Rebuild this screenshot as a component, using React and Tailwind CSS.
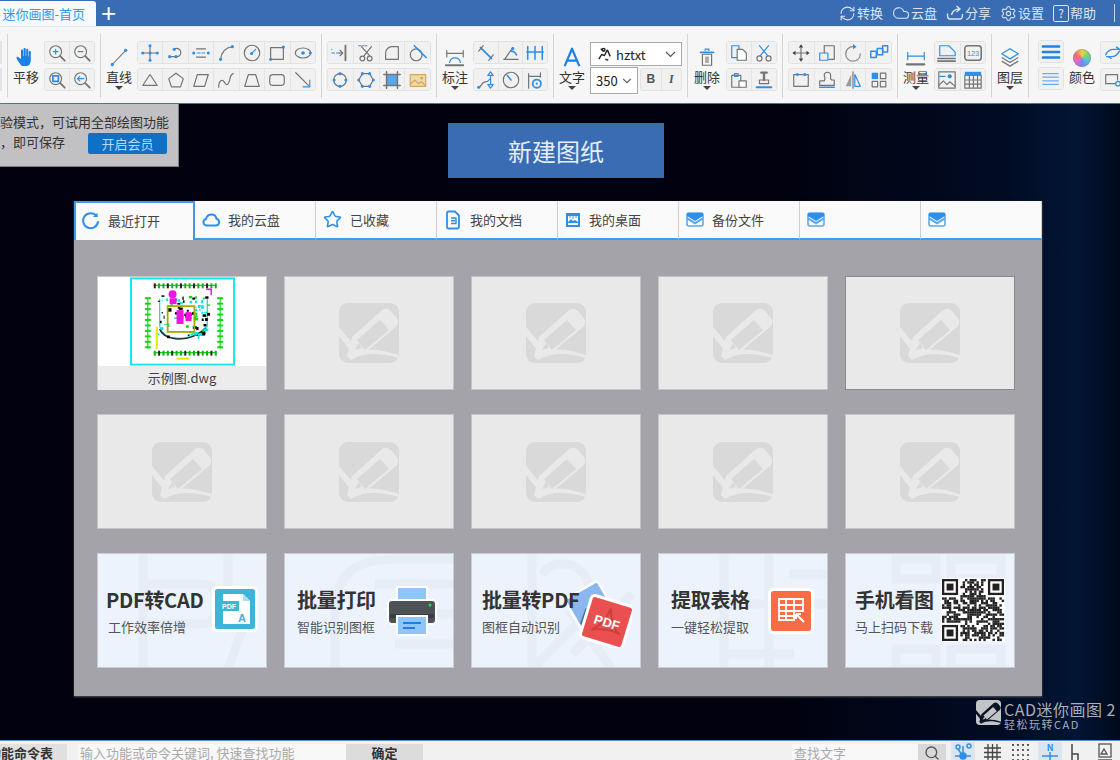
import React from "react";
import { RefreshCw, Cloud, Settings, Star, Search } from "lucide-react";

const G = "#747474";
const B = "#2f8fe8";
const FONT = "font-['Noto_Sans_CJK_SC','Noto_Sans',sans-serif]";

const D = ({ x, y, r = 1.7 }) => <circle cx={x} cy={y} r={r} fill={B} stroke="none" />;

const ICONS = {
  zoomIn: <><circle cx="9.5" cy="9.5" r="6.5" /><path d="M7 9.5h5M9.5 7v5" stroke={B} /><path d="M14.5 14.5l5 5" strokeWidth="2" /></>,
  zoomOut: <><circle cx="9.5" cy="9.5" r="6.5" /><path d="M7 9.5h5" stroke={B} /><path d="M14.5 14.5l5 5" strokeWidth="2" /></>,
  zoomWin: <><circle cx="9.5" cy="9.5" r="6.5" /><rect x="6.5" y="6.5" width="6" height="6" stroke={B} strokeWidth="2" /><path d="M14.5 14.5l5 5" strokeWidth="2" /></>,
  zoomPrev: <><circle cx="9.5" cy="9.5" r="6.5" /><path d="M6 9.5h7M8.5 7L6 9.5 8.5 12" stroke={B} /><path d="M14.5 14.5l5 5" strokeWidth="2" /></>,
  cross: <><path d="M3 11h16M11 3v16" /><D x="3" y="11" /><D x="19" y="11" /><D x="11" y="3" /><D x="11" y="19" /><D x="11" y="11" /></>,
  poly: <><path d="M4 15h8a4.5 4.5 0 1 0-3-8" /><D x="4" y="15" /><D x="11" y="15" /><D x="9" y="7" /></>,
  dash: <><path d="M6 6.5h10M6 15.5h10" /><D x="3" y="11" /><D x="19" y="11" /><path d="M7 11h3M12 11h3" stroke={B} /></>,
  arc: <><path d="M5 18C6 10 11 5 18 4" /><D x="5" y="18" /><D x="18" y="4" /></>,
  circ: <><circle cx="11" cy="11" r="8.5" /><path d="M11 11l4-4" stroke={B} /><D x="10.5" y="11.5" /></>,
  rect: <><rect x="4" y="5" width="14" height="13" /><D x="18" y="4.5" /><D x="4" y="18" /></>,
  ell: <><ellipse cx="11" cy="11" rx="8.5" ry="5.5" /><D x="11" y="11" r="2" /><D x="19" y="11" /></>,
  tri: <path d="M11 5l8 12H3z" />,
  pent: <path d="M11 3.5l8 6-3 9H6l-3-9z" />,
  para: <path d="M7 5h12l-4 13H3z" />,
  curve: <path d="M3 19c0-8 4-9 6-6s3 5 5 1 1-9 5-10" />,
  trap: <path d="M7 5h8l4 13H3z" />,
  round: <rect x="3" y="5" width="16" height="12" rx="3.5" />,
  arrow: <><path d="M3 3l14 14" /><path d="M18.5 11v7.5H11" stroke={B} /></>,
  trim: <><path d="M2 11h3M7 11h3" stroke={B} /><path d="M2 7h0M11 8l3 3-3 3M10 11h4" /><path d="M17 3v16" strokeWidth="2" /></>,
  scissorDot: <><path d="M3 3h9" stroke={B} strokeDasharray="2 1.5" /><path d="M6 4l9 10M17 4l-8 10" /><circle cx="7" cy="17" r="2.6" /><circle cx="15" cy="17" r="2.6" /></>,
  corner: <path d="M11 4h7v14H4v-7a7 7 0 0 1 7-7z" />,
  circLine: <><circle cx="9" cy="13" r="6.5" /><path d="M7 3l13 13" stroke={B} strokeWidth="1.8" /></>,
  cd1: <><circle cx="11" cy="11" r="7" /><D x="11" y="4" /><D x="4.5" y="11" /><D x="17.5" y="11" /><D x="11" y="18" /></>,
  cd2: <><path d="M7 4h8l4 7-4 7H7l-4-7z" /><D x="7" y="4" /><D x="15" y="4" /><D x="3" y="11" /><D x="19" y="11" /><D x="7" y="18" /><D x="15" y="18" /></>,
  hatch: <><rect x="5" y="5" width="12" height="12" fill="#5aa6ea" stroke="none" /><path d="M5 2v18M17 2v18M2 5h18M2 17h18" strokeWidth="1.6" /></>,
  pic: <><rect x="2.5" y="5" width="17" height="13" fill="#f0d9a8" stroke="#d7a85b" /><path d="M2.5 16l5-5 4 4 3-2 5 4" stroke="#d7a85b" /><circle cx="15" cy="9" r="1.5" fill="#d7a85b" stroke="none" /></>,
  dimD: <><path d="M5 5l12 12" stroke={B} strokeWidth="2" /><path d="M3 9l5-6M14 19l5-6" /></>,
  dimA: <><path d="M3 18h16M4 18L13 5" /><path d="M11 9a7 7 0 0 1 6 4" stroke={B} strokeWidth="1.8" /><D x="13" y="6" /></>,
  dimM: <><path d="M3 4v14M11 4v14M19 4v14" stroke={B} strokeWidth="1.7" /><path d="M2 10h18" stroke={B} strokeWidth="1.7" /></>,
  leader: <><path d="M3 19c3 0 3-6 7-6s3-1 5-3" /><path d="M16 2l-3 4h6zM16 20l-3-4h6zM16 6v10" stroke={B} fill="none" /><D x="3" y="19" /></>,
  clock: <><circle cx="11" cy="11" r="8.5" /><path d="M7 6l4 5" stroke={B} strokeWidth="1.8" /></>,
  gearDim: <><path d="M4 4v16M17 3v5M4 7h13" /><circle cx="13" cy="15" r="4.5" stroke={B} strokeWidth="2" /><circle cx="13" cy="15" r="1.2" fill={B} stroke="none" /></>,
  copy: <><path d="M3 3h8v13H3z" stroke={B} /><path d="M9 7h6l4 4v8H9z" fill="#fff" /></>,
  scissors: <><path d="M6 3l9 11M16 3l-9 11" stroke={B} /><circle cx="6" cy="17" r="2.8" /><circle cx="16" cy="17" r="2.8" /></>,
  paste: <><path d="M3 6h10v13H3z" /><path d="M6 4h4v3H6z" stroke={B} /><path d="M11 12h8v7h-8z" fill="#fff" /></>,
  brush: <><path d="M11 3v8M8 3h6" strokeWidth="2.5" /><path d="M6 11h10v4H6z" /><path d="M3 19h16" stroke={B} strokeWidth="2.4" /></>,
  move: <><path d="M11 5v12M5 11h12" /><path d="M11 1.5L8.5 5h5zM11 20.5L8.5 17h5zM1.5 11L5 8.5v5zM20.5 11L17 8.5v5z" fill="#444" stroke="none" /></>,
  scale: <><path d="M8 3h11v15h-6" /><rect x="3" y="11" width="9" height="8" stroke={B} /><path d="M8 3v8" /></>,
  rotate: <><path d="M11 4a8 8 0 1 0 8 8" stroke="#888" /><path d="M11 1l4 3-4 3z" fill={B} stroke="none" /></>,
  array: <><rect x="2" y="9" width="6" height="7" stroke={B} strokeWidth="1.6" /><rect x="9" y="6" width="6" height="7" stroke={B} strokeWidth="1.6" /><rect x="15" y="3" width="5.5" height="7" stroke={B} strokeWidth="1.6" /></>,
  stretch: <><path d="M6 5H3v13h16V5h-3" /><path d="M9 5h4" /><D x="7" y="5" /><D x="15" y="5" /></>,
  stamp: <><path d="M8 12c2-3 0-4 0-6a3.5 3.5 0 0 1 7 0c0 2-1 3 1 5h3v6H3v-5h5" /><path d="M3 19h16" stroke={B} strokeWidth="1.6" /></>,
  mirror: <><path d="M9 5L3 18h6z" fill="#999" stroke="none" /><path d="M13 5l6 13h-6z" stroke={B} /><path d="M11 2v18" /></>,
  squares: <><rect x="3" y="3" width="7" height="7" fill={B} stroke="none" /><rect x="12.5" y="3.5" width="6" height="6" /><rect x="3.5" y="12.5" width="6" height="6" /><rect x="12.5" y="12.5" width="6" height="6" /></>,
  area: <><path d="M3 3h10l7 7v4H3z" stroke={B} /><path d="M1 17h20M1 20h20" strokeDasharray="1.5 1" strokeWidth="1.8" /></>,
  num: <><rect x="2" y="3" width="18" height="16" rx="3" strokeWidth="1.7" /><text x="11" y="14.5" fontSize="8" textAnchor="middle" fill={B} stroke="none" fontFamily="Liberation Sans">123</text></>,
  image: <><rect x="2" y="2" width="18" height="18" /><path d="M2 17l5-5 4 4 3-3 6 5" /><path d="M3 7h6" stroke={B} /><circle cx="14" cy="7" r="2.3" fill={B} stroke="none" /></>,
  table: <><rect x="2" y="2" width="18" height="4.5" fill={B} stroke="none" /><path d="M2 6v14h18V6M2 11h18M2 15.5h18M7 6v14M11.5 6v14M16 6v14" /></>,
  lines: <path d="M2 5h18M2 11h18M2 17h18" stroke="#1e82e6" strokeWidth="2.6" />,
  dashes: <path d="M2 5h18M2 9h18M2 13h18M2 17h18" stroke="#63aaf0" strokeDasharray="2 1" />,
  layerRot: <><path d="M3 13c2-5 5-6 9-6h6M18 7l-3-2.5M4 15h6c4 0 6-2 8-6" stroke={B} strokeWidth="1.6" /><path d="M6 15l3 2" stroke={B} /></>,
  rectDot: <><path d="M14 15H3V5h13v6" /><circle cx="16.5" cy="15" r="2.5" stroke={B} /></>,
};

const Ic = ({ n, s = 20 }) => (
  <svg viewBox="0 0 22 22" width={s} height={s} fill="none" stroke={G} strokeWidth="1.3" strokeLinejoin="round" strokeLinecap="round">
    {ICONS[n]}
  </svg>
);

const Row = ({ items }) => (
  <div className="flex h-[23px] rounded-[3px] border border-[#e2e2e2] bg-[#efefef] divide-x divide-[#e4e4e4]">
    {items.map((n, i) => (
      <div key={i} className="flex flex-1 items-center justify-center min-w-0 bg-[#f1f1f1]">
        <Ic n={n} s={20} />
      </div>
    ))}
  </div>
);

const Group = ({ w, top, bottom }) => (
  <div className={`flex shrink-0 flex-col gap-[4px] pt-[14px] ${w}`}>
    <Row items={top} />
    <Row items={bottom} />
  </div>
);

const Sep = () => <div className="mt-[7px] h-[64px] w-px shrink-0 bg-[#d4d4d4]" />;

const Caret = () => <div className="mt-[1px] h-0 w-0 border-x-[4px] border-t-[4px] border-x-transparent border-t-[#444]" />;

const Big = ({ w = "w-[26px]", label, caret = true, children }) => (
  <div className={`flex shrink-0 flex-col items-center pt-[16px] ${w}`}>
    <div className="flex h-[28px] items-center justify-center">{children}</div>
    <div className="-mt-[2px] h-[16px] whitespace-nowrap text-[13px] leading-[16px] text-[#333]">{label}</div>
    {caret && <Caret />}
  </div>
);

const Hand = () => (
  <svg viewBox="0 0 22 22" width="22" height="22" fill="#1c80e6">
    <path d="M7 20c-2-2-5-6-5.500-8-.3-1.300 1.200-1.800 2-.8L6 13V4.500c0-1.500 2-1.500 2 0V10h.5V3c0-1.500 2.200-1.500 2.200 0v7h.5V3.800c0-1.500 2.100-1.500 2.100 0V10.500h.5V6c0-1.400 2-1.400 2 0v8c0 3-1.500 6-4 6z" />
  </svg>
);

const Wand = ({ children, s = 22 }) => (
  <svg viewBox="0 0 24 24" width={s} height={s} fill="none" stroke={G} strokeWidth="1.300" strokeLinecap="round">
    {children}
  </svg>
);

const Toolbar = () => (
  <div className={`flex h-[77px] shrink-0 items-start gap-[5px] overflow-hidden border-b border-b-[#3f74bb] bg-[#f6f6f6] ${FONT}`}>
    <div className="w-[2px] shrink-0 pt-[14px]">
      <div className="h-[23px] bg-[#e4e4e4]" />
      <div className="mt-[4px] h-[23px] bg-[#e4e4e4]" />
    </div>
    <Sep />
    <Big label="平移" caret={false}><Hand /></Big>
    <Group w="w-[51px]" top={["zoomIn", "zoomOut"]} bottom={["zoomWin", "zoomPrev"]} />
    <Sep />
    <Big label="直线">
      <Wand s={20}><path d="M4 21L20 4" /><D x="4" y="21" r="2" /><D x="20" y="4" r="2" /></Wand>
    </Big>
    <Group w="w-[179px]" top={["cross", "poly", "dash", "arc", "circ", "rect", "ell"]} bottom={["tri", "pent", "para", "curve", "trap", "round", "arrow"]} />
    <Sep />
    <Group w="w-[104px]" top={["trim", "scissorDot", "corner", "circLine"]} bottom={["cd1", "cd2", "hatch", "pic"]} />
    <Sep />
    <Big label="标注">
      <Wand><path d="M3 5v7M21 5v7M3 8h18" /><path d="M2 21h20" strokeWidth="2" strokeDasharray="1.500 1" /><path d="M6 18c1-4 3-5 6-5s5 1 6 5" stroke={B} /></Wand>
    </Big>
    <Group w="w-[75px]" top={["dimD", "dimA", "dimM"]} bottom={["leader", "clock", "gearDim"]} />
    <Sep />
    <Big label="文字">
      <svg viewBox="0 0 24 24" width="22" height="22" fill="none" stroke="#1c80e6" strokeWidth="2.400" strokeLinejoin="round"><path d="M4 22L12 3l8 19M7 16h10" /></svg>
    </Big>
    <div className="w-[92px] shrink-0 pt-[15px]">
      <div className="flex h-[24px] items-center gap-[3px] border border-[#a9a9a9] bg-white pl-[5px] pr-[5px]">
        <svg viewBox="0 0 18 18" width="17" height="17" fill="none" stroke="#222" strokeWidth="1.500"><path d="M3 14l3-5 3 1 3-6M5 3l3 2M10 14l3 1M12 4l3 7" /><circle cx="8" cy="4" r="1.500" /></svg>
        <span className="text-[13px] leading-none text-[#222]">hztxt</span>
        <svg className="ml-auto" width="11" height="7" viewBox="0 0 11 7" fill="none" stroke="#555" strokeWidth="1.200"><path d="M1 1l4.500 4.500L10 1" /></svg>
      </div>
      <div className="mt-[1px] flex gap-[2px]">
        <div className="flex h-[27px] w-[48px] shrink-0 items-center justify-between border border-[#a9a9a9] bg-white px-[5px]">
          <span className="text-[13px] text-[#222]">350</span>
          <svg width="10" height="6" viewBox="0 0 11 7" fill="none" stroke="#555" strokeWidth="1.200"><path d="M1 1l4.500 4.500L10 1" /></svg>
        </div>
        <div className="mt-[1px] flex h-[23px] w-[42px] divide-x divide-[#e4e4e4] rounded-[3px] border border-[#e2e2e2] bg-[#f1f1f1] text-[12px] text-[#555]">
          <span className="flex-1 text-center font-bold leading-[21px] font-['Liberation_Sans',sans-serif]">B</span>
          <span className="flex-1 text-center font-bold italic leading-[21px] font-['Liberation_Serif',serif]">I</span>
        </div>
      </div>
    </div>
    <Sep />
    <Big w="w-[28px]" label="删除">
      <Wand><path d="M5 7h14" stroke="#2f8fe8" strokeWidth="2" /><path d="M10 5V3.500h4V5" stroke="#2f8fe8" /><path d="M7 9h10v12H7z" /><path d="M10 11.500h4v7h-4z" fill="#aaa" stroke="none" /></Wand>
    </Big>
    <Group w="w-[51px]" top={["copy", "scissors"]} bottom={["paste", "brush"]} />
    <Sep />
    <Group w="w-[104px]" top={["move", "scale", "rotate", "array"]} bottom={["stretch", "stamp", "mirror", "squares"]} />
    <Sep />
    <Big label="测量">
      <Wand><path d="M3 7v8M21 7v8M3 11h18" stroke="#2f8fe8" /><path d="M2 20h20" strokeWidth="2.400" strokeDasharray="1.500 1" /></Wand>
    </Big>
    <Group w="w-[52px]" top={["area", "num"]} bottom={["image", "table"]} />
    <Sep />
    <Big label="图层">
      <svg viewBox="0 0 24 24" width="22" height="22" fill="none" strokeWidth="1.400" strokeLinejoin="round"><path d="M12 3l9 5.500-9 5.500-9-5.500z" stroke="#2f8fe8" /><path d="M3 12.500l9 5.500 9-5.500M3 16.500l9 5.500 9-5.500" stroke="#777" /></svg>
    </Big>
    <Sep />
    <div className="ml-[4px] flex w-[26px] shrink-0 flex-col gap-[3px] pt-[13px]">
      <div className="h-[24px]"><Row items={["lines"]} /></div>
      <div className="h-[24px]"><Row items={["dashes"]} /></div>
    </div>
    <Big label="颜色" caret={false}>
      <div className="mt-[2px] h-[18px] w-[18px] rounded-full bg-[conic-gradient(#f2d24b,#7bd66a,#4fc3e8,#7f7ff0,#e86ac8,#f0706a,#f2d24b)] shadow-[inset_0_0_2px_#777]" />
    </Big>
    <div className="flex w-[26px] shrink-0 flex-col gap-[4px] pt-[14px]">
      <Row items={["layerRot"]} />
      <Row items={["rectDot"]} />
    </div>
  </div>
);

const TOPLINKS = [
  ["转换", <RefreshCw key="a" size={17} strokeWidth={1.500} />],
  ["云盘", <Cloud key="b" size={18} strokeWidth={1.500} />],
  ["分享", <svg key="c" width="18" height="16" viewBox="0 0 17 16" fill="none" stroke="currentColor" strokeWidth="1.400"><path d="M1 8.500C1 12 1 14 3 14h11c2 0 2-3 2-5M5 10c1-4 4-6 8-6M10 1l3.500 3L10 7" /></svg>],
  ["设置", <Settings key="d" size={17} strokeWidth={1.500} />],
  ["帮助", <span key="e" className="flex h-[17px] w-[16px] items-center justify-center rounded-[2px] border border-current text-[12px] leading-none">?</span>],
];

const TitleBar = () => (
  <div className={`flex h-[27px] shrink-0 border-b border-b-[#dfe6f2] bg-[#3a6cb3] ${FONT}`}>
    <div className="mt-[1px] flex w-[96px] items-center justify-end overflow-hidden rounded-tr-[3px] bg-[#f7f9fc] pr-[11px]">
      <span className="whitespace-nowrap text-[13px] text-[#2b9bf0]">迷你画图-首页</span>
    </div>
    <span className="ml-[5px] mt-[1px] text-[26px] font-['Liberation_Sans',sans-serif] leading-[25px] text-white">+</span>
    <div className="ml-auto flex items-center gap-[9px] pr-[24px] text-[13px] text-[#dbe5f3]">
      {TOPLINKS.map(([t, ic]) => (
        <div key={t} className="flex items-center gap-[1px]">
          {ic}
          <span>{t}</span>
        </div>
      ))}
    </div>
    <div className="absolute left-[1114px] top-[4px] h-[18px] w-px bg-[#c9d7ea]" />
  </div>
);

const Tab1 = () => <svg width="19" height="19" viewBox="0 0 19 19" fill="none" stroke={B} strokeWidth="2" strokeLinecap="round"><path d="M15.500 5A7.500 7.500 0 1 0 17 11" /><path d="M12 6h4.500V1.800z" fill={B} stroke="none" /></svg>;
const Tab2 = () => <svg width="18" height="14" viewBox="0 0 18 14" fill="none" stroke={B} strokeWidth="2" strokeLinejoin="round"><path d="M4.500 12.500a3.300 3.300 0 0 1-.5-6.500C4.800 3 7 1.500 9.500 1.500c2.800 0 4.600 2 5 4.300a3.400 3.400 0 0 1-.8 6.700z" /></svg>;
const Tab3 = () => <Star size={19} strokeWidth={2} color={B} />;
const Tab4 = () => <svg width="18" height="20" viewBox="0 0 18 20" fill="none" stroke={B} strokeWidth="1.800" strokeLinejoin="round"><path d="M4 1.500h7l4 4V17a1.500 1.500 0 0 1-1.500 1.500h-9A1.500 1.500 0 0 1 3 17V2.500z" /><path d="M7 8h5v5.500H7M7 10.800h4" strokeWidth="1.400" /></svg>;
const Tab5 = () => <svg width="16" height="16" viewBox="0 0 16 16" fill={B}><path d="M1 1h14v14H1z" /><path d="M3 4h10v6l-3-2-2 1-2-2-3 3z" fill="#fff" /><path d="M3 11h10v2H3z" fill="#fff" /><path d="M5 4v2M8 4v3M11 4v2" stroke={B} /></svg>;
const Tab6 = () => (
  <svg width="18" height="15" viewBox="0 0 18 15">
    <rect x="1" y="1" width="16" height="13" rx="2" fill="#fff" stroke="#5aa9f0" strokeWidth="1.600" />
    <path d="M1 1h16v3l-8 5-8-5z" fill={B} />
    <path d="M1 5l8 5 8-5v2.500l-8 5-8-5z" fill="#58a8ef" />
  </svg>
);

const TABS = [
  ["最近打开", Tab1], ["我的云盘", Tab2], ["已收藏", Tab3], ["我的文档", Tab4],
  ["我的桌面", Tab5], ["备份文件", Tab6], ["", Tab6], ["", Tab6],
];

const Tabs = () => (
  <div className={`flex h-[39px] bg-[#fafafa] ${FONT}`}>
    {TABS.map(([t, I], i) => (
      <div
        key={i}
        className={
          i === 0
            ? "flex w-[121px] items-center gap-[8px] border-2 border-b-0 border-[#3e9be8] pb-[2px] pl-[5px] text-[13px] text-[#444]"
            : "flex w-[121px] items-center gap-[8px] border-r border-b-2 border-r-[#cfcfcf] border-b-[#3e9be8] pl-[7px] text-[13px] text-[#444]"
        }
      >
        <I />
        <span>{t}</span>
      </div>
    ))}
  </div>
);

const Pencil = ({ bg = "#d9d9d9", fg = "#e9e9e9", s = 60 }) => (
  <svg width={s} height={s} viewBox="0 0 60 60">
    <rect width="60" height="60" rx="9" fill={bg} />
    <path d="M0 24l15 18-4 5L0 33z" fill={fg} />
    <path d="M8 53c14-9 30-8 52-1v3c-20-5-34-6-48 2z" fill={fg} />
    <path d="M8 53l5-19L42 8c3-3 7-3 10 0l5 6c3 3 3 7 0 10L27 49z" fill={fg} />
    <path d="M18 37l23-20 9 10-24 20z" fill={bg} />
    <path d="M20 40l-4 7 7-2z" fill={bg} />
  </svg>
);

const Blank = ({ hover }) => (
  <div className={hover ? "flex items-center justify-center border border-[#8a8a8a] bg-[#e9e9e9]" : "flex items-center justify-center border border-[#c4c4c4] bg-[#e9e9e9]"}>
    <Pencil />
  </div>
);

const rnd = (seed) => {
  let s = seed;
  return () => {
    s = (s * 16807) % 2147483647;
    return s / 2147483647;
  };
};

const CadDrawing = () => {
  const r = rnd(7);
  const ticks = [];
  for (let i = 0; i < 15; i++) {
    ticks.push({ x: 24 + i * 4.4, y: 6, w: 2, h: 5 });
    ticks.push({ x: 24 + i * 4.4, y: 74, w: 2, h: 5 });
  }
  const side = [];
  for (let i = 0; i < 10; i++) {
    side.push({ x: 15, y: 20 + i * 5.500, w: 6, h: 2 });
    side.push({ x: 88, y: 20 + i * 5.500, w: 6, h: 2 });
  }
  const bits = [];
  const cols = ["#00e5e5", "#000", "#16d916", "#00e5e5", "#000"];
  for (let i = 0; i < 90; i++) {
    bits.push({ x: 28 + r() * 50, y: 18 + r() * 42, w: 1 + r() * 3, h: 1 + r() * 2.500, c: cols[i % 5] });
  }
  return (
    <svg width="105" height="89" viewBox="0 0 106 89" className="shrink-0">
      <rect x="1" y="1" width="104" height="87" fill="#fff" stroke="#15e8ee" strokeWidth="2" />
      <path d="M24 8h62M24 76h62M18 20v52M91 20v52" stroke="#12d812" strokeWidth="1.200" />
      {ticks.map((t, i) => <rect key={i} x={t.x} y={t.y} width={t.w} height={t.h} fill={i % 3 ? "#12b012" : "#222"} />)}
      {side.map((t, i) => <rect key={i} x={t.x} y={t.y} width={t.w} height={t.h} fill="#12d812" />)}
      <path d="M30 22v26c0 6 6 12 14 13 14 2 24-2 34-12V22" fill="none" stroke="#17d2d2" strokeWidth="1.200" />
      <path d="M30 52c2 6 8 9 16 10 12 1 22-3 31-11" fill="none" stroke="#222" strokeWidth="1.500" />
      {bits.map((b, i) => <rect key={i} x={b.x} y={b.y} width={b.w} height={b.h} fill={b.c} />)}
      <rect x="38" y="29" width="27" height="26" fill="none" stroke="#a8a800" strokeWidth="1.800" />
      <circle cx="43" cy="17" r="4" fill="#f013e0" />
      <rect x="40" y="21" width="7" height="6" fill="#f013e0" />
      <rect x="47" y="33" width="7" height="14" fill="#f013e0" />
      <rect x="56" y="35" width="6" height="9" fill="#f013e0" />
      <path d="M77 12h5v6" stroke="#f013e0" strokeWidth="1.500" fill="none" />
      <path d="M27 50v22" stroke="#e6e600" strokeWidth="2" />
      <rect x="47" y="81" width="13" height="2" fill="#e6e600" />
    </svg>
  );
};

const QR = () => {
  const n = 27;
  const cell = 62 / n;
  const r = rnd(31);
  const cells = [];
  const inFinder = (x, y) => (x < 8 && y < 8) || (x >= n - 8 && y < 8) || (x < 8 && y >= n - 8);
  for (let y = 0; y < n; y++) {
    for (let x = 0; x < n; x++) {
      if (!inFinder(x, y) && r() > 0.42) cells.push([x, y]);
    }
  }
  const finder = (fx, fy) => (
    <g key={`${fx}-${fy}`}>
      <rect x={fx * cell} y={fy * cell} width={7 * cell} height={7 * cell} fill="#222" />
      <rect x={(fx + 1) * cell} y={(fy + 1) * cell} width={5 * cell} height={5 * cell} fill="#fff" />
      <rect x={(fx + 2) * cell} y={(fy + 2) * cell} width={3 * cell} height={3 * cell} fill="#222" />
    </g>
  );
  return (
    <svg width="64" height="64" viewBox="-1 -1 64 64" className="bg-white">
      {cells.map(([x, y], i) => <rect key={i} x={x * cell} y={y * cell} width={cell + 0.1} height={cell + 0.1} fill="#222" />)}
      {finder(0, 0)}{finder(n - 7, 0)}{finder(0, n - 7)}
    </svg>
  );
};

const PdfIcon = () => (
  <svg width="46" height="46" viewBox="0 0 46 46">
    <rect x="1.500" y="1.500" width="43" height="43" rx="4" fill="#3cb5d6" stroke="#fff" strokeWidth="3" />
    <path d="M11 8h20l7 7v23H11z" fill="#fff" />
    <path d="M31 8v7h7z" fill="#a9e0ef" />
    <rect x="7" y="15" width="20" height="10" fill="#3cb5d6" />
    <text x="17" y="23" fontSize="7" fontWeight="700" fill="#fff" textAnchor="middle" fontFamily="Liberation Sans">PDF</text>
    <text x="30" y="36" fontSize="11" fontWeight="700" fill="#3cb5d6" textAnchor="middle" fontFamily="Liberation Sans">A</text>
  </svg>
);

const Printer = () => (
  <svg width="52" height="52" viewBox="0 0 52 52">
    <path d="M11 2h30v18H11z" fill="#8fc6fa" stroke="#fff" strokeWidth="2" />
    <path d="M6 15h40a4 4 0 0 1 4 4v16a4 4 0 0 1-4 4H6a4 4 0 0 1-4-4V19a4 4 0 0 1 4-4z" fill="#4d5257" stroke="#fff" strokeWidth="2" />
    <rect x="4" y="29" width="44" height="4" fill="#3a3e42" />
    <circle cx="44" cy="20" r="1.500" fill="#2bd36b" />
    <path d="M11 31h30v19H11z" fill="#8fc6fa" stroke="#fff" strokeWidth="2" />
    <path d="M17 38h18M17 43h12" stroke="#2a7bdc" strokeWidth="2" />
  </svg>
);

const BatchPdf = () => (
  <svg width="68" height="70" viewBox="0 0 68 70">
    <g transform="rotate(-30 26 30)">
      <rect x="8" y="10" width="38" height="44" rx="3" fill="#8ab8ee" stroke="#fff" strokeWidth="2.500" />
      <path d="M10 38l12-10 22 22H10z" fill="#3f6f9e" />
    </g>
    <g transform="rotate(17 43 44)">
      <rect x="21" y="22" width="44" height="44" rx="4" fill="#e9504f" stroke="#fff" strokeWidth="3" />
      <path d="M30 56c10-6 12-20 13-26 2 8 8 20 16 22-10-2-22 0-29 4z" fill="none" stroke="#d23f3f" strokeWidth="2" />
      <text x="43" y="49" fontSize="13" fontWeight="700" fill="#fff" textAnchor="middle" fontFamily="Liberation Sans">PDF</text>
    </g>
  </svg>
);

const TableIcon = () => (
  <svg width="46" height="46" viewBox="0 0 46 46">
    <rect x="1.500" y="1.500" width="43" height="43" rx="4" fill="#fb6b45" stroke="#fff" strokeWidth="3" />
    <path d="M11 11h24v12h-9v9H11zM11 17h24M11 23h15M11 28h15M18 11v21M26 11v12" fill="none" stroke="#fff" strokeWidth="1.800" />
    <path d="M28 26l8 8M28 26v5M28 26h5" fill="none" stroke="#fff" strokeWidth="2" />
  </svg>
);

const Faint = ({ v }) => {
  const shapes = {
    a: <path d="M45 0v115M45 30h60c20 0 20 40 0 40H45M130 0v50M150 60l-20 55" />,
    b: <path d="M50 60c0-40 20-55 60-55h60M90 30h80M110 60h60M110 90h60M50 60v55" />,
    c: <path d="M60 0v115M70 20a26 26 0 1 1 30 40L140 115M60 115l60-60M160 40l-60 60" />,
    d: <path d="M65 0v115M110 0v115M65 50h105M65 100h70M130 20h40" />,
    e: <path d="M50 5h40v20H50zM105 5h50v20h-50zM50 95h40v20H50zM105 95h50v20h-50zM50 40h30" />,
  };
  return (
    <svg className="absolute inset-0" width="170" height="115" viewBox="0 0 170 115" fill="none" stroke="#e6edf7" strokeWidth="9">
      {shapes[v]}
    </svg>
  );
};

const PROMOS = [
  { v: "a", t: "PDF转CAD", s: "工作效率倍增", col: "w-[114px] pl-[8px]", sub: "pl-[2px]", ic: "mt-[32px]", I: PdfIcon },
  { v: "b", t: "批量打印", s: "智能识别图框", col: "w-[101px] pl-[12px]", sub: "", ic: "mt-[31px]", I: Printer },
  { v: "c", t: "批量转PDF", s: "图框自动识别", col: "w-[92px] pl-[10px]", sub: "", ic: "mt-[24px]", I: BatchPdf },
  { v: "d", t: "提取表格", s: "一键轻松提取", col: "w-[109px] pl-[12px]", sub: "", ic: "mt-[34px]", I: TableIcon },
  { v: "e", t: "手机看图", s: "马上扫码下载", col: "w-[95px] pl-[9px]", sub: "", ic: "mt-[24px]", I: QR },
];

const Promo = ({ p }) => (
  <div className="relative flex overflow-hidden border border-[#c9ccd2] bg-[#ecf3fd]">
    <Faint v={p.v} />
    <div className={`relative z-10 shrink-0 whitespace-nowrap pt-[31px] ${p.col}`}>
      <div className="text-[20px] font-bold leading-[30px] tracking-[-0.3px] text-[#333]">{p.t}</div>
      <div className={`mt-[2px] text-[13px] leading-[20px] text-[#555] ${p.sub}`}>{p.s}</div>
    </div>
    <div className={`relative shrink-0 ${p.ic}`}><p.I /></div>
  </div>
);

const Cards = () => (
  <div className={`grid w-[918px] grid-cols-5 grid-rows-[114px_115px_115px] gap-x-[17px] gap-y-[24px] ${FONT}`}>
    <div className="flex flex-col border border-[#c9c9c9] bg-white">
      <div className="flex h-[90px] justify-center"><CadDrawing /></div>
      <div className="flex-1 bg-[#ececec] text-center text-[13px] leading-[24px] text-[#444]">示例图.dwg</div>
    </div>
    <Blank /><Blank /><Blank /><Blank hover />
    <Blank /><Blank /><Blank /><Blank /><Blank />
    {PROMOS.map((p) => <Promo key={p.t} p={p} />)}
  </div>
);

const Main = () => (
  <div className="relative h-[636px] shrink-0 overflow-hidden bg-[linear-gradient(90deg,#01010f_0%,#01010f_70%,#010c24_90%,#021535_96%,#010a1c_100%)]">
    <div className={`absolute left-0 top-0 flex h-[63px] w-[179px] flex-col items-start border-b border-r border-[#7f7f83] bg-[#c1c1c4] pt-[9px] text-[13px] text-[#333] ${FONT}`}>
      <div className="leading-[18px]">验模式，可试用全部绘图功能</div>
      <div className="mt-[2px] flex items-center">
        <span className="-mt-[3px] w-[88px]">，即可保存</span>
        <span className="flex h-[21px] w-[79px] items-center justify-center rounded-[2px] bg-[#0f70c8] text-[#b9d6f2]">开启会员</span>
      </div>
    </div>
    <div className="pt-[19px]">
      <div className={`ml-[448px] flex h-[55px] w-[216px] items-center justify-center bg-[#3a6cb3] text-[24px] text-[#e6edf7] ${FONT}`}>新建图纸</div>
      <div className="ml-[74px] mt-[23px] h-[495px] w-[968px] shadow-[0_1px_2px_#555] bg-[#a3a3a9]">
        <Tabs />
        <div className="pl-[23px] pt-[36px]"><Cards /></div>
      </div>
    </div>
    <div className={`absolute left-[976px] top-[596px] flex w-[160px] items-start gap-[2px] text-[#a9adb5] ${FONT}`}>
      <div className="shrink-0"><Pencil bg="#c2c4c8" fg="#0a1326" s={25} /></div>
      <div className="ml-[1px] whitespace-nowrap">
        <div className="text-[16px] leading-[18px] tracking-[0.5px]">CAD迷你画图 2</div>
        <div className="text-[11px] leading-[13px] tracking-[1.500px]">轻松玩转CAD</div>
      </div>
    </div>
  </div>
);

const StatusBar = () => (
  <div className={`flex h-[26px] shrink-0 border-t border-t-[#5c8fca] bg-[#f1f1f1] pt-[3px] text-[13px] ${FONT}`}>
    <div className="flex h-full w-[67px] justify-end overflow-hidden bg-[#e0e0e0] pr-[14px] font-bold leading-[18px] text-[#333] whitespace-nowrap">功能命令表</div>
    <div className="ml-[11px] h-full w-[268px] bg-[#f8f8f8] pl-[2px] leading-[18px] text-[#aaa]">输入功能或命令关键词, 快速查找功能</div>
    <div className="h-full w-[77px] bg-[#dcdcdc] text-center font-bold leading-[18px] text-[#333]">确定</div>
    <div className="ml-[369px] h-full w-[126px] bg-[#f8f8f8] pl-[2px] leading-[18px] text-[#aaa]">查找文字</div>
    <div className="flex h-full w-[28px] items-start justify-center bg-[#d8d8d8] pt-[1px]"><Search size={16} color="#555" /></div>
    <div className="ml-[5px] -mt-[2px] flex h-full w-[24px] items-start justify-center bg-[#dbe5f0] pt-[1px]">
      <svg width="20" height="18" viewBox="0 0 20 18" fill="none" stroke={B} strokeWidth="1.500"><circle cx="5" cy="4" r="2" /><circle cx="16" cy="3" r="2" /><circle cx="10" cy="13" r="3" fill={B} /><path d="M5 6l4 6M2 13h16M10 3v7" /></svg>
    </div>
    <div className="ml-[9px]">
      <svg width="17" height="17" viewBox="0 0 17 17" stroke="#444" strokeWidth="1.300"><path d="M4 0v17M8.500 0v17M13 0v17M0 4h17M0 8.500h17M0 13h17" /></svg>
    </div>
    <div className="ml-[11px]">
      <svg width="18" height="17" viewBox="0 0 18 17" fill="#444">
        {[1, 6, 11, 16].map((y) => [1, 6, 11, 16].map((x) => <circle key={`${x}-${y}`} cx={x} cy={y} r="1.100" />))}
      </svg>
    </div>
    <div className="ml-[8px] -mt-[2px] flex h-full w-[24px] flex-col items-center bg-[#dbe5f0]">
      <span className="mt-[1px] text-[9px] font-bold leading-[9px] text-[#2f8fe8]">N</span>
      <svg width="18" height="8" viewBox="0 0 18 8" stroke={B} strokeWidth="1.500" fill="none"><path d="M1 4h16M9 0v8" /></svg>
    </div>
    <div className="ml-[8px]">
      <svg width="10" height="17" viewBox="0 0 10 17" fill="none" stroke="#444" strokeWidth="1.500"><path d="M2 0v17M2 10h6v7" /></svg>
    </div>
    <div className="ml-[18px] -mt-[1px]">
      <svg width="14" height="18" viewBox="0 0 14 18" fill="none" stroke="#555" strokeWidth="1.300"><rect x="1" y="1" width="12" height="13" /><path d="M3 11l3-5 3 5zM0 17h14" /></svg>
    </div>
  </div>
);

export default function App() {
  return (
    <div className="relative flex h-[760px] w-[1120px] flex-col overflow-hidden bg-[#01010f]">
      <TitleBar />
      <Toolbar />
      <Main />
      <StatusBar />
    </div>
  );
}
